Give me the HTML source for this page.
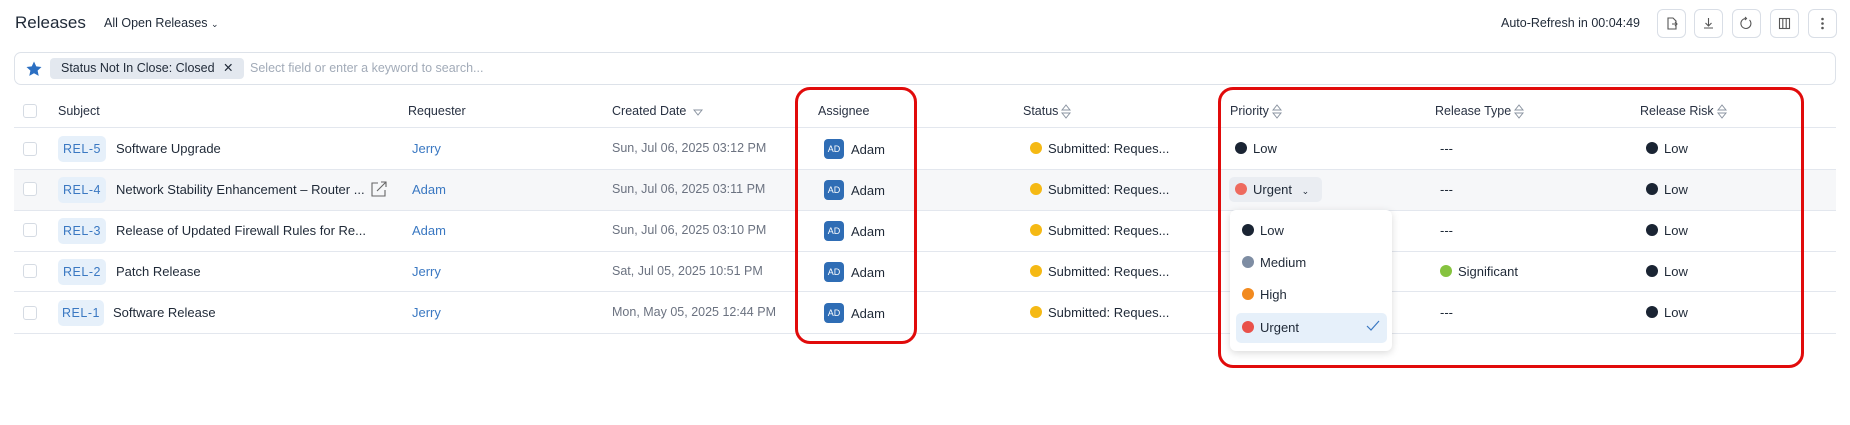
<!DOCTYPE html>
<html><head><meta charset="utf-8"><style>
*{box-sizing:border-box;margin:0;padding:0}
body{width:1850px;height:425px;background:#fff;font-family:"Liberation Sans",sans-serif;color:#1f2937;font-size:13px;position:relative;overflow:hidden}
.a{position:absolute;white-space:nowrap}
.btn{position:absolute;top:9px;width:29px;height:29px;border:1px solid #d9dee6;border-radius:6px;background:#fff}
.hline{position:absolute;left:14px;width:1822px;height:1px;background:#e3e7ee}
.cb{position:absolute;left:23px;width:14px;height:14px;border:1px solid #d5dbe3;border-radius:3px;background:#fff}
.rel{position:absolute;left:58px;height:26px;border-radius:5px;background:#e6f0fa;color:#3a78c2;font-size:12.5px;line-height:26px;text-align:center;letter-spacing:.5px}
.asg{position:absolute;left:824px;height:20px;display:flex;align-items:center;white-space:nowrap}
.av{display:inline-block;width:20px;height:20px;border-radius:4px;background:#2f6db5;color:#fff;font-size:9px;line-height:20px;text-align:center;margin-right:7px}
.dot{display:inline-block;width:12px;height:12px;border-radius:50%;vertical-align:-1px;margin-right:6px}
.hd{font-size:12.5px;color:#283142}
.sort{display:inline-block;vertical-align:middle;margin-left:3px}
.blue{color:#3a78c2}
.gray{color:#6b7280;font-size:12.5px}
.red{position:absolute;border:3px solid #e10b0b;border-radius:15px}
</style></head><body>
<div class="a" style="left:15px;top:13px;font-size:17px;color:#1f2937">Releases</div>
<div class="a" style="left:104px;top:16px;font-size:12.5px">All Open Releases <span style="font-size:9px">&#8964;</span></div>
<div class="a" style="left:1501px;top:16px;font-size:12.5px">Auto-Refresh in 00:04:49</div>
<div class="btn" style="left:1657px"><svg width="27" height="27" viewBox="0 0 27 27" fill="none" stroke="#555" stroke-width="1.1"><path d="M10 8h5l3 3v8h-8z M14 14h5 M17 12l2 2-2 2"/></svg></div>
<div class="btn" style="left:1694px"><svg width="27" height="27" viewBox="0 0 27 27" fill="none" stroke="#555" stroke-width="1.1"><path d="M13.5 8v8 M10.5 13l3 3 3-3 M9 18h9"/></svg></div>
<div class="btn" style="left:1732px"><svg width="27" height="27" viewBox="0 0 27 27" fill="none" stroke="#555" stroke-width="1.1"><path d="M16.5 10a5 5 0 1 1-4-1.5 M12 7l1.5 1.5L12 10"/></svg></div>
<div class="btn" style="left:1770px"><svg width="27" height="27" viewBox="0 0 27 27" fill="none" stroke="#555" stroke-width="1.1"><rect x="8.5" y="8.5" width="10" height="10"/><path d="M11.8 8.5v10 M15.2 8.5v10"/></svg></div>
<div class="btn" style="left:1808px"><svg width="27" height="27" viewBox="0 0 27 27" fill="#555"><circle cx="13.5" cy="9" r="1.3"/><circle cx="13.5" cy="13.5" r="1.3"/><circle cx="13.5" cy="18" r="1.3"/></svg></div>

<div class="a" style="left:14px;top:52px;width:1822px;height:33px;border:1px solid #dde2e9;border-radius:7px"></div>
<svg class="a" style="left:25px;top:60px" width="18" height="18" viewBox="0 0 24 24"><path d="M12 2l3 6.5 7 .8-5.2 4.8 1.5 7L12 17.6 5.7 21.1l1.5-7L2 9.3l7-.8z" fill="#2b6fc2"/></svg>
<div class="a" style="left:50px;top:58px;width:194px;height:21px;background:#e3e8ef;border-radius:4px;font-size:12.5px;line-height:21px;padding-left:11px">Status Not In Close: Closed <span style="margin-left:5px">✕</span></div>
<div class="a" style="left:250px;top:61px;font-size:12.5px;color:#a2abb8">Select field or enter a keyword to search...</div>

<div class="a" style="left:14px;top:170px;width:1822px;height:40px;background:#f6f7f9"></div>
<div class="hline" style="top:127px"></div>
<div class="hline" style="top:169px"></div>
<div class="hline" style="top:210px"></div>
<div class="hline" style="top:251px"></div>
<div class="hline" style="top:291px"></div>
<div class="hline" style="top:333px"></div>

<div class="cb" style="top:104px"></div>
<div class="a hd" style="left:58px;top:104px">Subject</div>
<div class="a hd" style="left:408px;top:104px">Requester</div>
<div class="a hd" style="left:612px;top:104px">Created Date <svg class="sort" width="10" height="8"><path d="M1 2h8L5 7z" fill="none" stroke="#8a93a0"/></svg></div>
<div class="a hd" style="left:818px;top:104px">Assignee</div>
<div class="a hd" style="left:1023px;top:104px">Status<svg class="sort" width="10" height="15"><path d="M1 6L5 1l4 5z M1 9l4 5 4-5z" fill="none" stroke="#8a93a0"/></svg></div>
<div class="a hd" style="left:1230px;top:104px">Priority<svg class="sort" width="10" height="15"><path d="M1 6L5 1l4 5z M1 9l4 5 4-5z" fill="none" stroke="#8a93a0"/></svg></div>
<div class="a hd" style="left:1435px;top:104px">Release Type<svg class="sort" width="10" height="15"><path d="M1 6L5 1l4 5z M1 9l4 5 4-5z" fill="none" stroke="#8a93a0"/></svg></div>
<div class="a hd" style="left:1640px;top:104px">Release Risk<svg class="sort" width="10" height="15"><path d="M1 6L5 1l4 5z M1 9l4 5 4-5z" fill="none" stroke="#8a93a0"/></svg></div>

<!-- rows -->
<div class="cb" style="top:142px"></div>
<div class="rel" style="top:136px;width:48px">REL-5</div>
<div class="a" style="left:116px;top:141px">Software Upgrade</div>
<div class="a blue" style="left:412px;top:141px">Jerry</div>
<div class="a gray" style="left:612px;top:141px">Sun, Jul 06, 2025 03:12 PM</div>
<div class="asg" style="top:139px"><span class="av">AD</span>Adam</div>
<div class="a" style="left:1030px;top:141px"><span class="dot" style="background:#f5b914"></span>Submitted: Reques...</div>
<div class="a" style="left:1235px;top:141px"><span class="dot" style="background:#1a2433"></span>Low</div>
<div class="a" style="left:1440px;top:141px">---</div>
<div class="a" style="left:1646px;top:141px"><span class="dot" style="background:#1a2433"></span>Low</div>

<div class="cb" style="top:182px"></div>
<div class="rel" style="top:177px;width:48px">REL-4</div>
<div class="a" style="left:116px;top:182px">Network Stability Enhancement – Router ...</div>
<svg class="a" style="left:370px;top:180px" width="17" height="18" viewBox="0 0 17 18" fill="none" stroke="#666" stroke-width="1.1"><path d="M8 3H2v13h13v-6 M7 11L16 2 M11 2h5v5"/></svg>
<div class="a blue" style="left:412px;top:182px">Adam</div>
<div class="a gray" style="left:612px;top:182px">Sun, Jul 06, 2025 03:11 PM</div>
<div class="asg" style="top:180px"><span class="av">AD</span>Adam</div>
<div class="a" style="left:1030px;top:182px"><span class="dot" style="background:#f5b914"></span>Submitted: Reques...</div>
<div class="a" style="left:1229px;top:177px;width:93px;height:25px;background:#eaedf2;border-radius:5px"></div>
<div class="a" style="left:1235px;top:182px"><span class="dot" style="background:#ee6a5e"></span>Urgent <span style="font-size:9px;margin-left:6px">&#8964;</span></div>
<div class="a" style="left:1440px;top:182px">---</div>
<div class="a" style="left:1646px;top:182px"><span class="dot" style="background:#1a2433"></span>Low</div>

<div class="cb" style="top:223px"></div>
<div class="rel" style="top:218px;width:48px">REL-3</div>
<div class="a" style="left:116px;top:223px">Release of Updated Firewall Rules for Re...</div>
<div class="a blue" style="left:412px;top:223px">Adam</div>
<div class="a gray" style="left:612px;top:223px">Sun, Jul 06, 2025 03:10 PM</div>
<div class="asg" style="top:221px"><span class="av">AD</span>Adam</div>
<div class="a" style="left:1030px;top:223px"><span class="dot" style="background:#f5b914"></span>Submitted: Reques...</div>
<div class="a" style="left:1440px;top:223px">---</div>
<div class="a" style="left:1646px;top:223px"><span class="dot" style="background:#1a2433"></span>Low</div>

<div class="cb" style="top:264px"></div>
<div class="rel" style="top:259px;width:48px">REL-2</div>
<div class="a" style="left:116px;top:264px">Patch Release</div>
<div class="a blue" style="left:412px;top:264px">Jerry</div>
<div class="a gray" style="left:612px;top:264px">Sat, Jul 05, 2025 10:51 PM</div>
<div class="asg" style="top:262px"><span class="av">AD</span>Adam</div>
<div class="a" style="left:1030px;top:264px"><span class="dot" style="background:#f5b914"></span>Submitted: Reques...</div>
<div class="a" style="left:1440px;top:264px"><span class="dot" style="background:#86c33f"></span>Significant</div>
<div class="a" style="left:1646px;top:264px"><span class="dot" style="background:#1a2433"></span>Low</div>

<div class="cb" style="top:306px"></div>
<div class="rel" style="top:300px;width:46px">REL-1</div>
<div class="a" style="left:113px;top:305px">Software Release</div>
<div class="a blue" style="left:412px;top:305px">Jerry</div>
<div class="a gray" style="left:612px;top:305px">Mon, May 05, 2025 12:44 PM</div>
<div class="asg" style="top:303px"><span class="av">AD</span>Adam</div>
<div class="a" style="left:1030px;top:305px"><span class="dot" style="background:#f5b914"></span>Submitted: Reques...</div>
<div class="a" style="left:1440px;top:305px">---</div>
<div class="a" style="left:1646px;top:305px"><span class="dot" style="background:#1a2433"></span>Low</div>

<!-- dropdown -->
<div class="a" style="left:1230px;top:210px;width:162px;height:141px;background:#fff;border-radius:6px;box-shadow:0 2px 8px rgba(0,0,0,.15)"></div>
<div class="a" style="left:1236px;top:313px;width:151px;height:30px;background:#e6f0fa;border-radius:5px"></div>
<div class="a" style="left:1242px;top:223px"><span class="dot" style="background:#1a2433"></span>Low</div>
<div class="a" style="left:1242px;top:255px"><span class="dot" style="background:#7e8da3"></span>Medium</div>
<div class="a" style="left:1242px;top:287px"><span class="dot" style="background:#f28a1f"></span>High</div>
<div class="a" style="left:1242px;top:320px"><span class="dot" style="background:#e9514a"></span>Urgent</div>
<svg class="a" style="left:1366px;top:320px" width="14" height="12"><path d="M1 6l4 4 8-9" fill="none" stroke="#3a78c2" stroke-width="1.2"/></svg>

<div class="red" style="left:795px;top:87px;width:122px;height:257px"></div>
<div class="red" style="left:1218px;top:87px;width:586px;height:281px"></div>
</body></html>
